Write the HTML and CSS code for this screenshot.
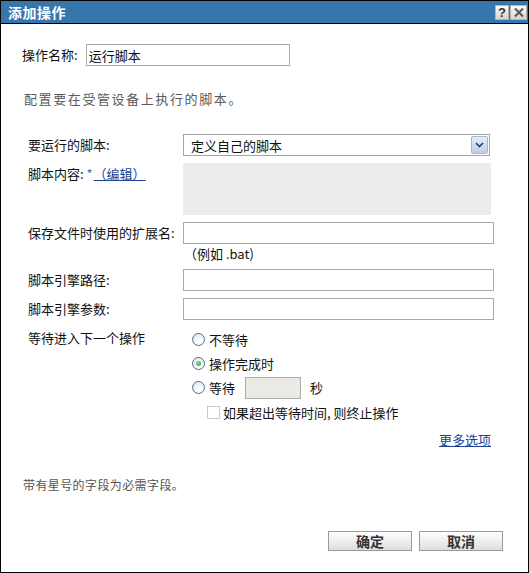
FILE: index.html
```html
<!DOCTYPE html>
<html lang="zh-CN">
<head>
  <meta charset="UTF-8" />
  <title>添加操作</title>
  <link rel="stylesheet" href="styles.css">
</head>
<body>
  <div class="dialog">
    <!-- 标题栏 -->
    <div class="titlebar">
      <span class="title">添加操作</span>
      <div class="title-btns">
        <span class="tbtn help">?</span>
        <span class="tbtn close">
          <svg width="12" height="11" viewBox="0 0 12 11"><path d="M2 1.5 L10 9.5 M10 1.5 L2 9.5" stroke="#555" stroke-width="2" fill="none"/></svg>
        </span>
      </div>
    </div>

    <div class="content">
      <div class="name-row">
        <label class="name-lbl">操作名称:</label>
        <input class="text name" value="运行脚本">
      </div>
      <p class="desc">配置要在受管设备上执行的脚本。</p>

      <div class="form">
        <label class="lbl">要运行的脚本:</label>
        <div class="select">
          <span>定义自己的脚本</span>
          <span class="arrow">
            <svg width="9" height="6" viewBox="0 0 9 6"><path d="M1 1 L4.5 4.5 L8 1" stroke="#2b3f5c" stroke-width="1.6" fill="none"/></svg>
          </span>
        </div>

        <label class="lbl">脚本内容: <span class="req">*</span><a href="#" class="link">（编辑）</a></label>
        <div class="script-box"></div>

        <label class="lbl">保存文件时使用的扩展名:</label>
        <div>
          <input class="text wide">
          <div class="hint">（例如 .bat)</div>
        </div>

        <label class="lbl">脚本引擎路径:</label>
        <input class="text wide">

        <label class="lbl">脚本引擎参数:</label>
        <input class="text wide">

        <label class="lbl">等待进入下一个操作</label>
        <div class="waits">
          <div class="opt"><span class="radio"></span>不等待</div>
          <div class="opt"><span class="radio on"></span>操作完成时</div>
          <div class="opt tall"><span class="radio"></span>等待 <input class="text secs" disabled> 秒</div>
          <div class="opt sub"><span class="check"></span>如果超出等待时间, 则终止操作</div>
          <div class="more"><a href="#" class="link">更多选项</a></div>
        </div>
      </div>

      <p class="note">带有星号的字段为必需字段。</p>

      <div class="actions">
        <button class="btn">确定</button>
        <button class="btn">取消</button>
      </div>
    </div>
  </div>
</body>
</html>
```

FILE: styles.css
```css
body {
  margin: 0;
  padding: 0;
  font-family: "Noto Sans CJK SC", "Liberation Sans", sans-serif;
  font-size: 13px;
  color: #111;
  background: #fff;
}
.dialog {
  width: 529px;
  height: 573px;
  box-sizing: border-box;
  border: 1px solid #000;
  display: flex;
  flex-direction: column;
}
.titlebar {
  height: 22px;
  background: #3776ad;
  border-bottom: 1px solid #000;
  display: flex;
  align-items: center;
  justify-content: space-between;
  padding: 0 1px 0 7px;
}
.title {
  color: #fff;
  font-weight: bold;
  font-size: 14px;
  letter-spacing: 0.5px;
  line-height: 16px;
}
.title-btns {
  display: flex;
  gap: 1px;
  align-self: flex-start;
  margin-top: 4px;
}
.tbtn {
  height: 13px;
  border: 1px solid #b4b4b4;
  background: linear-gradient(#fbfbfb, #d4d4d4);
  display: flex;
  align-items: center;
  justify-content: center;
}
.tbtn.help {
  width: 12px;
  font-family: "Liberation Sans", sans-serif;
  font-weight: bold;
  font-size: 13px;
  color: #333;
  line-height: 13px;
}
.tbtn.close { width: 15px; }

.content {
  flex: 1;
  display: flex;
  flex-direction: column;
  padding: 20px 25px 21px 21px;
}
.name-row {
  display: flex;
  align-items: center;
  gap: 8px;
}
.name-lbl { line-height: 22px; }
.text {
  height: 22px;
  box-sizing: border-box;
  border: 1px solid #a9a9a9;
  padding: 0 2px;
  font-family: inherit;
  font-size: 13px;
  color: #111;
  background: #fff;
  outline: none;
}
.text.name { width: 204px; }
.text.wide { width: 311px; display: block; }
.desc {
  margin: 25px 0 0 2px;
  line-height: 16px;
  color: #5a5a5a;
  letter-spacing: 1.6px;
}

.form {
  margin: 27px 0 0 6px;
  display: grid;
  grid-template-columns: 155px 311px;
  row-gap: 7px;
  align-items: start;
}
.lbl { line-height: 22px; }
.select {
  width: 307px;
  height: 22px;
  box-sizing: border-box;
  border: 1px solid #a5a5a5;
  display: flex;
  align-items: center;
  justify-content: space-between;
  padding: 0 1px 0 7px;
}
.arrow {
  width: 15px;
  height: 16px;
  border: 1px solid #a3b6d2;
  border-radius: 2px;
  background: linear-gradient(#e4ecf7, #bccfe9);
  display: flex;
  align-items: center;
  justify-content: center;
}
.req { color: #3f6fc0; margin-right: 1px; }
.link {
  color: #1b3f96;
  text-decoration: underline;
}
.script-box {
  width: 308px;
  height: 52px;
  background: #ececea;
}
.hint {
  margin-top: 2px;
  line-height: 16px;
  padding-left: 1px;
}

.waits {
  padding-left: 9px;
  display: flex;
  flex-direction: column;
}
.opt {
  height: 24px;
  display: flex;
  align-items: center;
  gap: 4px;
}
.opt.tall { height: 25px; }
.opt.sub { padding-left: 15px; gap: 3px; }
.radio {
  width: 11px;
  height: 11px;
  border: 1px solid #4d6f97;
  border-radius: 50%;
  background: radial-gradient(circle at 60% 65%, #ffffff 20%, #dcdfe3 90%);
  display: flex;
  align-items: center;
  justify-content: center;
}
.radio.on::after {
  content: "";
  width: 5px;
  height: 5px;
  border-radius: 50%;
  background: radial-gradient(circle at 40% 40%, #8fe08f, #1f9a2a);
}
.check {
  width: 11px;
  height: 11px;
  border: 1px solid #c9c9c9;
  background: #fff;
}
.text.secs {
  width: 56px;
  margin: 0 5px 0 6px;
  background: #ebeae4;
  border-color: #acacac;
}
.more {
  margin-top: 4px;
  height: 24px;
  line-height: 24px;
  text-align: right;
  padding-right: 3px;
}

.note {
  margin: 25px 0 0 1px;
  line-height: 16px;
  color: #555;
  font-size: 12px;
  letter-spacing: 0.4px;
}
.actions {
  margin-top: auto;
  display: flex;
  justify-content: flex-end;
  gap: 7px;
}
.btn {
  width: 84px;
  height: 20px;
  border: 1px solid #9a9a9a;
  background: linear-gradient(#ffffff, #dedede);
  font-family: inherit;
  font-size: 14px;
  font-weight: bold;
  color: #333;
  line-height: 16px;
  padding: 0;
}
```
